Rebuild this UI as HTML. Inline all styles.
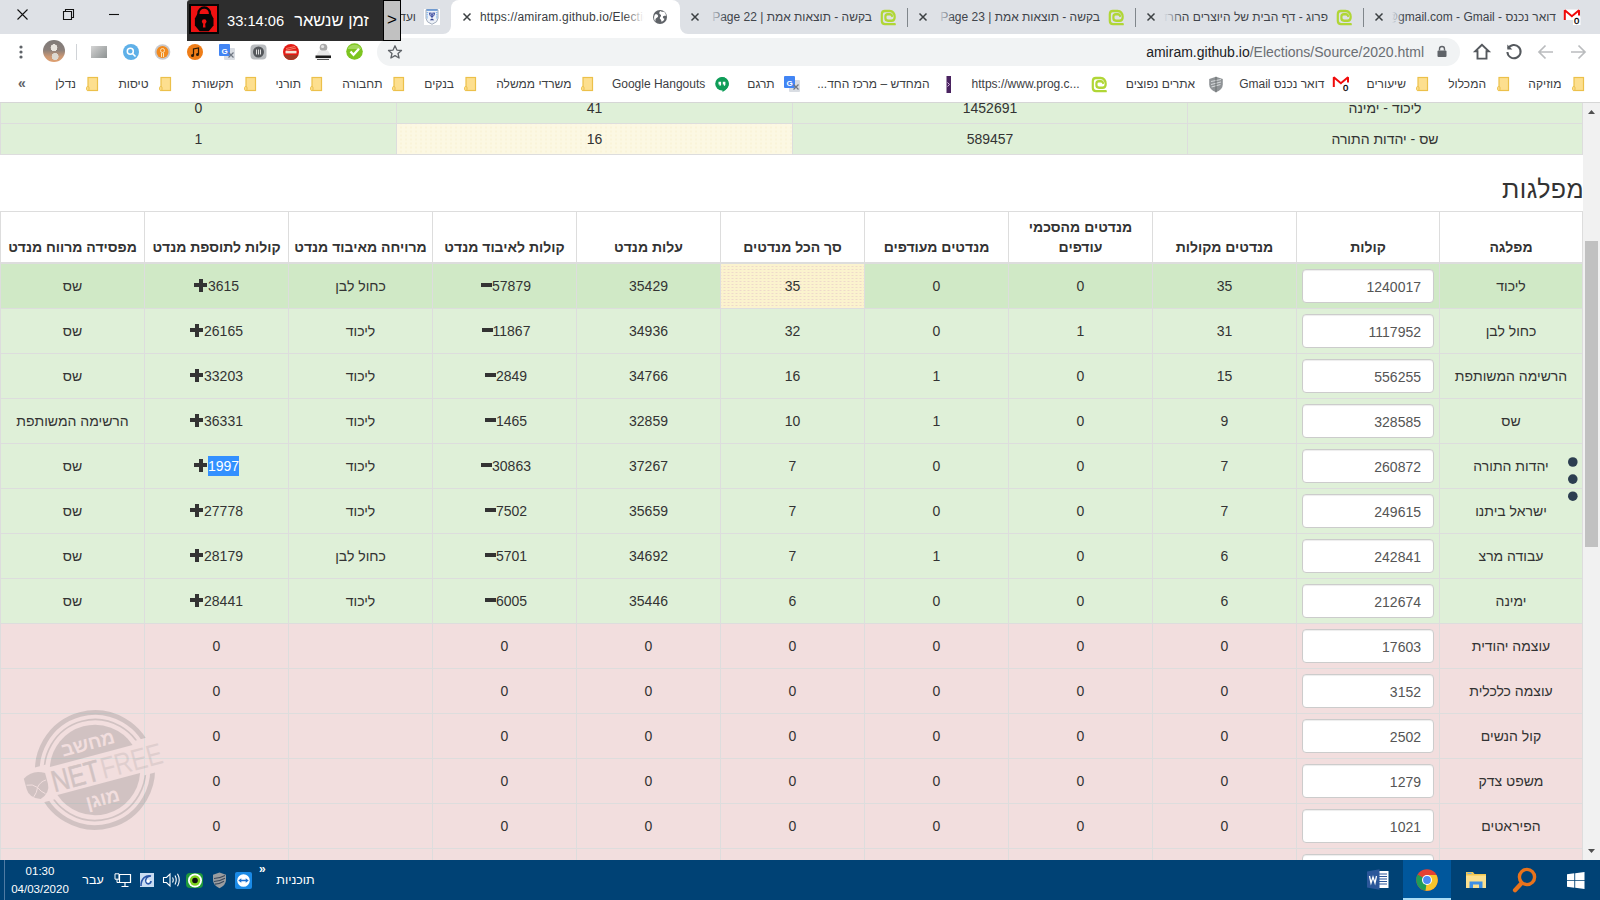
<!DOCTYPE html>
<html lang="he">
<head>
<meta charset="utf-8">
<title>Elections 2020</title>
<style>
*{box-sizing:border-box;margin:0;padding:0}
html,body{width:1600px;height:900px;overflow:hidden;background:#fff}
body{position:relative;font-family:"Liberation Sans","DejaVu Sans",sans-serif;color:#333;font-size:14px}
.abs{position:absolute}
/* ---------- browser chrome ---------- */
#tabstrip{left:0;top:0;width:1600px;height:34px;background:#dee1e6}
#toolbar{left:0;top:34px;width:1600px;height:34px;background:#fff}
#bookbar{left:0;top:68px;width:1600px;height:35px;background:#fff;border-bottom:1px solid #d6d6d6}
.tabtxt{position:absolute;top:9px;height:17px;line-height:17px;font-size:12px;color:#40444a;white-space:nowrap;overflow:hidden;direction:rtl;text-align:right}
.bm{position:absolute;top:8px;height:16px;line-height:16px;font-size:12px;color:#3c4043;white-space:nowrap;direction:rtl}
.fold{position:absolute;top:77px;width:12px;height:15px}
/* ---------- page ---------- */
#page{left:0;top:103px;width:1583px;height:757px;overflow:hidden;background:#fff;direction:rtl}
table{border-collapse:collapse;table-layout:fixed;direction:rtl}
td,th{border:1px solid #ddd;text-align:center;vertical-align:middle;padding:0;font-size:14px;color:#333;white-space:nowrap}
#t1{position:absolute;left:0;top:-11px;width:1583px}
#t1 td{height:31px;background:#dff0d8}
#t2{position:absolute;left:0;top:108px;width:1583px}
#t2 th{height:51px;font-weight:bold;vertical-align:bottom;padding-bottom:5px;line-height:20px;border-bottom:2px solid #ddd;white-space:normal}
#t2 td{height:45px}
tr.g td{background:#dff0d8}
tr.h td{background:#d0e9c6}
#t2 tr.h td{height:46px}
tr.r td{background:#f2dede}
td.w{background:#fbf3ce radial-gradient(rgba(228,196,200,.55) .5px,rgba(0,0,0,0) .8px) 1px 1px/4px 3px !important}
.inp{display:inline-block;width:132px;height:34px;border:1px solid #ccc;border-radius:4px;background:#fff;text-align:right;direction:ltr;padding:0 12px;line-height:34px;font-size:14px;color:#555;vertical-align:middle;box-shadow:inset 0 1px 1px rgba(0,0,0,.075)}
h2{position:absolute;right:-1px;top:70px;font-size:25px;letter-spacing:.4px;font-weight:normal;line-height:33px;color:#333}
.num{display:inline-block;direction:ltr;white-space:nowrap}
.mi,.pl{display:inline-block;position:relative;width:14px;height:14px;vertical-align:-2px}
.mi:before{content:"";position:absolute;left:3px;top:4px;width:11px;height:4px;background:#333}
.pl:before{content:"";position:absolute;left:0px;top:4px;width:13px;height:4px;background:#333}
.pl:after{content:"";position:absolute;left:5px;top:0px;width:4px;height:13px;background:#333}
.sel{background:#3390ff;color:#fff;display:inline-block;height:20px;line-height:20px}
/* ---------- taskbar ---------- */
#taskbar{left:0;top:860px;width:1600px;height:40px;background:#004275}
.tk{color:#fff;white-space:nowrap;line-height:16px;height:16px}
</style>
</head>
<body>
<div id="tabstrip" class="abs">
<!-- window controls -->
<svg class="abs" style="left:12px;top:3.500px" width="120" height="22" viewBox="0 0 120 22">
<path d="M5.5 5.5l10 10M15.5 5.5l-10 10" stroke="#111" stroke-width="1.1" fill="none"/>
<path d="M51.5 7.5h8v8h-8zM53.5 7.500v-2h8v8h-2" stroke="#111" stroke-width="1.1" fill="none"/>
<path d="M97 10.5h10" stroke="#111" stroke-width="1.1" fill="none"/>
</svg>
<!-- hovered left tab -->
<div class="tabtxt" style="left:392px;width:24px;color:#40444a">ועד</div>
<svg class="abs" style="left:424px;top:9px" width="16" height="16" viewBox="0 0 16 16"><rect width="16" height="16" fill="#fff"/><path d="M2 .8h12v8.500q0 4-6 6-6-2-6-6z" fill="#eef2f8" stroke="#9aa5b5" stroke-width=".9"/><path d="M2.500 1h11" stroke="#3f7fd0" stroke-width="1.200"/><path d="M3.200 3v7M12.800 3v7" stroke="#5aa0e8" stroke-width="1" stroke-dasharray="1.200 1"/><path d="M8 3.500v6M5.300 3.500q0 4 2.700 4.200 2.700-.2 2.700-4.200M6.600 3.500q0 2.600 1.400 2.800 1.400-.2 1.400-2.800" fill="none" stroke="#2f3f9a" stroke-width=".9"/><path d="M5.800 11.200q2.200-2.400 4.400 0z" fill="#1d2d80"/></svg>
<!-- active tab -->
<div class="abs" style="left:451px;top:0;width:229px;height:34px;background:#fff;border-radius:8px 8px 0 0"></div>
<svg class="abs" style="left:443px;top:26px" width="8" height="8"><path d="M8 0v8H0a8 8 0 0 0 8-8z" fill="#fff"/></svg>
<svg class="abs" style="left:680px;top:26px" width="8" height="8"><path d="M0 0v8h8a8 8 0 0 1-8-8z" fill="#fff"/></svg>
<svg class="abs" style="left:462px;top:12px" width="10" height="10"><path d="M1.500 1.500l7 7M8.500 1.500l-7 7" stroke="#3c4043" stroke-width="1.500" fill="none"/></svg>
<div class="tabtxt" id="tt0" style="left:480px;width:164px;letter-spacing:.18px;direction:ltr;text-align:left;color:#3a3d42">https://amiram.github.io/Elections/Source/2020.html</div>
<div class="abs" style="left:624px;top:6px;width:20px;height:22px;background:linear-gradient(90deg,rgba(255,255,255,0),#fff)"></div>
<svg class="abs" style="left:652px;top:9px" width="16" height="16" viewBox="0 0 16 16"><circle cx="8" cy="8" r="7" fill="#5f6368"/><path d="M3 5.500c1.500-.5 2.500 0 3 1s-.5 2-1.500 2.500-1.500 2-.8 3.500C2 11.500 1.500 8 3 5.500zM8.500 2c1 .8 2.500 1 3.500.8 1.200 1 2 2.500 2 4-1-.3-2.500-.3-3 .7s.5 2 1.500 2.200c-.5 1.500-1.500 2.500-3 3-.3-1-.2-2-1-2.500s-1-1.500 0-2.500.5-2-.5-2.500S7 3 8.500 2z" fill="#fff"/></svg>
<!-- tab: page 22 -->
<svg class="abs" style="left:690px;top:12px" width="10" height="10"><path d="M1.500 1.500l7 7M8.500 1.500l-7 7" stroke="#3c4043" stroke-width="1.500" fill="none"/></svg>
<div class="tabtxt" style="left:710px;width:162px">בקשה - תוצאות אמת | Page 22</div>
<div class="abs" style="left:710px;top:6px;width:16px;height:22px;background:linear-gradient(90deg,#dee1e6,rgba(222,225,230,0))"></div>
<svg class="abs prog" style="left:879.5px;top:8.500px" width="16" height="17" viewBox="0 0 16 15.500" preserveAspectRatio="none"><path d="M14.800 13.800H5q-3.200 0-3.200-3V4.800q0-3 3-3H9.500q5 .2 5.200 5.400 0 3.500-3.200 3.500H8q-2.600 0-2.600-2.400V7q0-2.200 2.400-2.200h2.200q1.800.2 2 1.500" fill="none" stroke="#b0d636" stroke-width="2.200" stroke-linecap="round"/></svg>
<div class="abs" style="left:907px;top:8px;width:1px;height:19px;background:#80868b"></div>
<!-- tab: page 23 -->
<svg class="abs" style="left:918px;top:12px" width="10" height="10"><path d="M1.500 1.500l7 7M8.500 1.500l-7 7" stroke="#3c4043" stroke-width="1.500" fill="none"/></svg>
<div class="tabtxt" style="left:938px;width:162px">בקשה - תוצאות אמת | Page 23</div>
<div class="abs" style="left:938px;top:6px;width:16px;height:22px;background:linear-gradient(90deg,#dee1e6,rgba(222,225,230,0))"></div>
<svg class="abs prog" style="left:1107.5px;top:8.500px" width="16" height="17" viewBox="0 0 16 15.500" preserveAspectRatio="none"><path d="M14.800 13.800H5q-3.200 0-3.200-3V4.800q0-3 3-3H9.500q5 .2 5.200 5.400 0 3.500-3.200 3.500H8q-2.600 0-2.600-2.400V7q0-2.200 2.400-2.200h2.200q1.800.2 2 1.500" fill="none" stroke="#b0d636" stroke-width="2.200" stroke-linecap="round"/></svg>
<div class="abs" style="left:1135px;top:8px;width:1px;height:19px;background:#80868b"></div>
<!-- tab: prog -->
<svg class="abs" style="left:1146px;top:12px" width="10" height="10"><path d="M1.500 1.500l7 7M8.500 1.500l-7 7" stroke="#3c4043" stroke-width="1.500" fill="none"/></svg>
<div class="tabtxt" style="left:1164px;width:164px">פרוג - דף הבית של היוצרים החרדים</div>
<div class="abs" style="left:1164px;top:6px;width:18px;height:22px;background:linear-gradient(90deg,#dee1e6,rgba(222,225,230,0))"></div>
<svg class="abs prog" style="left:1335.5px;top:8.500px" width="16" height="17" viewBox="0 0 16 15.500" preserveAspectRatio="none"><path d="M14.800 13.800H5q-3.200 0-3.200-3V4.800q0-3 3-3H9.500q5 .2 5.200 5.400 0 3.500-3.200 3.500H8q-2.600 0-2.600-2.400V7q0-2.200 2.400-2.200h2.200q1.800.2 2 1.500" fill="none" stroke="#b0d636" stroke-width="2.200" stroke-linecap="round"/></svg>
<div class="abs" style="left:1363px;top:8px;width:1px;height:19px;background:#80868b"></div>
<!-- tab: gmail -->
<svg class="abs" style="left:1374px;top:12px" width="10" height="10"><path d="M1.500 1.500l7 7M8.500 1.500l-7 7" stroke="#3c4043" stroke-width="1.500" fill="none"/></svg>
<div class="tabtxt" style="left:1392px;width:164px">דואר נכנס - amiram@gmail.com - Gmail</div>
<div class="abs" style="left:1392px;top:6px;width:12px;height:22px;background:linear-gradient(90deg,#dee1e6,rgba(222,225,230,0))"></div>
<svg class="abs" style="left:1563px;top:8px" width="19" height="18" viewBox="0 0 19 18"><rect x="1.500" y="1.500" width="15" height="10.500" fill="#fff"/><path d="M1.800 12V2.300l7.100 5.900 7.100-5.900V7.500" fill="none" stroke="#f00a0a" stroke-width="2" stroke-miterlimit="1.500"/><rect x="10" y="8.500" width="7.500" height="8.500" fill="#fff"/><text x="13.700" y="16.300" font-size="9.500" text-anchor="middle" fill="#000" stroke="#000" stroke-width=".3" font-family="Liberation Sans, sans-serif">0</text></svg>
</div>
<div id="toolbar" class="abs">
<!-- menu dots -->
<svg class="abs" style="left:18px;top:10px" width="6" height="16"><circle cx="3" cy="3" r="1.600" fill="#5f6368"/><circle cx="3" cy="8" r="1.600" fill="#5f6368"/><circle cx="3" cy="13" r="1.600" fill="#5f6368"/></svg>
<!-- avatar -->
<div class="abs" style="left:43px;top:6px;width:22px;height:22px;border-radius:50%;background:radial-gradient(circle at 50% 35%,#e8e4de 0 18%,rgba(0,0,0,0) 20%),radial-gradient(circle at 55% 75%,#ddd8d0 0 16%,rgba(0,0,0,0) 18%),linear-gradient(180deg,#7f7a78 0%,#8a7f7a 45%,#c99774 75%,#e0a070 100%)"></div>
<div class="abs" style="left:76px;top:10px;width:1px;height:16px;background:#d0d3d7"></div>
<!-- extensions -->
<div class="abs" style="left:91px;top:12px;width:16px;height:12px;background:linear-gradient(135deg,#d5d5d5,#a9acac 60%,#8d9292)"></div>
<svg class="abs" style="left:123px;top:10px" width="16" height="16"><circle cx="8" cy="8" r="8" fill="#5fb0e8"/><circle cx="7.300" cy="7.300" r="3" fill="none" stroke="#fff" stroke-width="1.500"/><path d="M9.500 9.500l3 3" stroke="#fff" stroke-width="1.600"/></svg>
<svg class="abs" style="left:154px;top:10px" width="17" height="16"><circle cx="8.500" cy="8" r="7.800" fill="#c9c9cc"/><circle cx="8.500" cy="8" r="6" fill="#f28a1e"/><circle cx="8.500" cy="6.500" r="2" fill="none" stroke="#fbe3b8" stroke-width="1"/><path d="M7.500 9v4M9.500 9v4" stroke="#fbe3b8" stroke-width="1"/></svg>
<svg class="abs" style="left:187px;top:10px" width="16" height="16"><circle cx="8" cy="8" r="8" fill="#ef7d17"/><path d="M6.500 11.500V5l5-1v6.500" fill="none" stroke="#2a1a08" stroke-width="1.200"/><circle cx="5.500" cy="11.500" r="1.500" fill="#2a1a08"/><circle cx="10.500" cy="10.500" r="1.500" fill="#2a1a08"/></svg>
<svg class="abs" style="left:218px;top:9px" width="18" height="18"><rect x="6" y="5" width="11" height="12" rx="1" fill="#d9dde3"/><rect x="1" y="1" width="11" height="12" rx="1" fill="#4285f4"/><text x="6.500" y="10.500" font-size="8" font-weight="bold" text-anchor="middle" fill="#fff" font-family="Liberation Sans, sans-serif">G</text><path d="M10.500 9.500l5 5M15.500 9.500l-5 5" stroke="#6f7782" stroke-width="1.200"/></svg>
<svg class="abs" style="left:250px;top:10px" width="17" height="16"><rect x="0.500" y="0.500" width="16" height="15" rx="4" fill="#b9bcbf"/><circle cx="8.500" cy="8" r="5.500" fill="#55585c"/><path d="M6.500 5.500v5M8.500 5.500v5M10.500 5.500v5" stroke="#e0e0e0" stroke-width="1"/></svg>
<svg class="abs" style="left:283px;top:10px" width="16" height="16"><defs><clipPath id="rc"><circle cx="8" cy="8" r="8"/></clipPath></defs><circle cx="8" cy="8" r="8" fill="#e41a14"/><rect x="0" y="11" width="16" height="5" fill="#a33a26" clip-path="url(#rc)"/><path d="M3 4.500l9-2M3 6.200l10-2.200" stroke="#f59a80" stroke-width=".8"/><rect x="2.500" y="6.800" width="11" height="2.600" fill="#f4e4d8"/></svg>
<svg class="abs" style="left:314px;top:8px" width="18" height="20"><circle cx="9.500" cy="5.500" r="3.800" fill="#a9a9a9"/><circle cx="8.600" cy="4.500" r="1.600" fill="#e4e4e4"/><path d="M5 8.500h9l3 5.500H2z" fill="#e9e9e9"/><rect x="1.500" y="13.500" width="15.500" height="2.600" fill="#1b1b1b"/><rect x="3" y="17" width="12" height="1" fill="#555"/></svg>
<svg class="abs" style="left:346px;top:9px" width="17" height="17"><circle cx="8.500" cy="8.500" r="8.300" fill="#7dc520"/><path d="M1.500 6a8 8 0 0 1 14 0z" fill="#a4d95c"/><path d="M4.500 8.500l3 3.200 5.500-6" fill="none" stroke="#fff" stroke-width="2.400"/></svg>
<!-- omnibox -->
<div class="abs" style="left:377px;top:4px;width:1083px;height:28px;border-radius:14px;background:#f1f3f4"></div>
<svg class="abs" style="left:387px;top:10px" width="16" height="16" viewBox="0 0 16 16"><path d="M8 1.800l1.900 4.300 4.600.4-3.500 3 1.100 4.500L8 11.600 3.900 14l1.100-4.500-3.500-3 4.600-.4z" fill="none" stroke="#5f6368" stroke-width="1.300" stroke-linejoin="round"/></svg>
<div class="abs" id="url" style="left:1100px;top:8px;width:324px;height:20px;line-height:20px;font-size:14px;text-align:right;direction:ltr;white-space:nowrap;color:#6a6e73"><span style="color:#202124">amiram.github.io</span>/Elections/Source/2020.html</div>
<svg class="abs" style="left:1436px;top:11.300px" width="12" height="13" viewBox="0 0 12 13"><path d="M3.500 5.500V4a2.500 2.500 0 0 1 5 0v1.500" fill="none" stroke="#5f6368" stroke-width="1.400"/><rect x="1.500" y="5.500" width="9" height="6.500" rx="1" fill="#5f6368"/></svg>
<!-- nav icons -->
<svg class="abs" style="left:1472px;top:8px" width="20" height="20" viewBox="0 0 20 20"><path d="M10 2.700l-6.800 6.600h2.300v7.300h9v-7.300h2.300z" fill="none" stroke="#55595e" stroke-width="1.900" stroke-linejoin="miter"/></svg>
<svg class="abs" style="left:1504px;top:8px" width="20" height="20" viewBox="0 0 20 20"><path d="M4.200 6.500A6.600 6.600 0 1 1 3.400 10" fill="none" stroke="#55595e" stroke-width="2"/><path d="M3.300 2.500v5h5z" fill="#55595e"/></svg>
<svg class="abs" style="left:1537px;top:10px" width="17" height="16" viewBox="0 0 17 16"><path d="M16 8H2.500M8.500 1.500L2 8l6.500 6.500" fill="none" stroke="#babcbe" stroke-width="1.700"/></svg>
<svg class="abs" style="left:1570px;top:10px" width="17" height="16" viewBox="0 0 17 16"><path d="M1 8h13.500M8.500 1.500L15 8l-6.500 6.500" fill="none" stroke="#babcbe" stroke-width="1.700"/></svg>
</div>
<div id="bookbar" class="abs">
<svg class="abs" style="left:1571.5px;top:8px" width="13" height="16" viewBox="0 0 13 16"><rect x="2" y="1.500" width="9.500" height="13" fill="#fddf8f" stroke="#ecc04a" stroke-width="1.200"/><rect x=".600" y="10.500" width="2.400" height="4" rx="1.200" fill="#fddf8f" stroke="#ecc04a" stroke-width="1"/></svg>
<div class="bm" style="right:38.6px;">מוזיקה</div>
<svg class="abs" style="left:1496.5px;top:8px" width="13" height="16" viewBox="0 0 13 16"><rect x="2" y="1.500" width="9.500" height="13" fill="#fddf8f" stroke="#ecc04a" stroke-width="1.200"/><rect x=".600" y="10.500" width="2.400" height="4" rx="1.200" fill="#fddf8f" stroke="#ecc04a" stroke-width="1"/></svg>
<div class="bm" style="right:114.0px;">המכלול</div>
<svg class="abs" style="left:1416.3px;top:8px" width="13" height="16" viewBox="0 0 13 16"><rect x="2" y="1.500" width="9.500" height="13" fill="#fddf8f" stroke="#ecc04a" stroke-width="1.200"/><rect x=".600" y="10.500" width="2.400" height="4" rx="1.200" fill="#fddf8f" stroke="#ecc04a" stroke-width="1"/></svg>
<div class="bm" style="right:194.0px;">שיעורים</div>
<svg class="abs" style="left:1332px;top:7px" width="19" height="18" viewBox="0 0 19 18"><rect x="1.500" y="1.500" width="15" height="10.500" fill="#fff"/><path d="M1.800 12V2.300l7.100 5.900 7.100-5.900V7.500" fill="none" stroke="#f00a0a" stroke-width="2" stroke-miterlimit="1.500"/><rect x="10" y="8.500" width="7.500" height="8.500" fill="#fff"/><text x="13.700" y="16.300" font-size="9.500" text-anchor="middle" fill="#000" stroke="#000" stroke-width=".3" font-family="Liberation Sans, sans-serif">0</text></svg>
<div class="bm" style="right:275.6px;">דואר נכנס Gmail</div>
<svg class="abs" style="left:1208px;top:8px" width="16" height="17" viewBox="0 0 16 17"><path d="M8 .8l6.800 2.200v5.500q0 5-6.800 7.800Q1.200 13.500 1.200 8.500V3z" fill="#8f9396"/><path d="M3 5.500l10-2M3 8.500l10-2.500M3.500 11l9-2.500" stroke="#d5d8da" stroke-width="1.100"/><path d="M8 .8v15.500" stroke="#5f6466" stroke-width=".8"/></svg>
<div class="bm" style="right:405.0px;">אתרים נפוצים</div>
<svg class="abs" style="left:1091px;top:7.500px" width="16" height="17" viewBox="0 0 16 15.500" preserveAspectRatio="none"><path d="M14.800 13.800H5q-3.200 0-3.200-3V4.800q0-3 3-3H9.500q5 .2 5.200 5.400 0 3.500-3.200 3.500H8q-2.600 0-2.600-2.400V7q0-2.200 2.400-2.200h2.200q1.800.2 2 1.500" fill="none" stroke="#b0d636" stroke-width="2.200" stroke-linecap="round"/></svg>
<div class="bm" style="right:520.4px;direction:ltr;">https://www.prog.c...</div>
<svg class="abs" style="left:946px;top:8px" width="6" height="17" viewBox="0 0 6 17"><rect x=".5" y="0" width="4.500" height="17" fill="#4a2360"/><path d="M1.500 6.500l2 2-2 2" stroke="#e8c8f0" stroke-width=".9" fill="none"/></svg>
<div class="bm" style="right:670.4px;">המחדש – מרכז החד...</div>
<svg class="abs" style="left:783px;top:7px" width="18" height="18"><rect x="6" y="5" width="11" height="12" rx="1" fill="#d9dde3"/><rect x="1" y="1" width="11" height="12" rx="1" fill="#4285f4"/><text x="6.500" y="10.500" font-size="8" font-weight="bold" text-anchor="middle" fill="#fff" font-family="Liberation Sans, sans-serif">G</text><path d="M10.500 9.500l5 5M15.500 9.500l-5 5" stroke="#6f7782" stroke-width="1.200"/></svg>
<div class="bm" style="right:825.4px;">תרגם</div>
<svg class="abs" style="left:714px;top:8px" width="16" height="17" viewBox="0 0 16 17"><path d="M8 1a6.800 6.800 0 0 1 6.800 6.800q0 5.200-6.300 8.200v-1.800A6.800 6.800 0 0 1 8 1z" fill="#0f9d58"/><circle cx="8" cy="7.800" r="6.800" fill="#0f9d58"/><path d="M4.500 5.800h2.600v2.600q0 1.400-1.500 1.600v-1.600h-1.100zM8.800 5.800h2.600v2.600q0 1.400-1.500 1.600v-1.600h-1.100z" fill="#fff"/></svg>
<div class="bm" style="right:894.7px;direction:ltr;">Google Hangouts</div>
<svg class="abs" style="left:581.0px;top:8px" width="13" height="16" viewBox="0 0 13 16"><rect x="2" y="1.500" width="9.500" height="13" fill="#fddf8f" stroke="#ecc04a" stroke-width="1.200"/><rect x=".600" y="10.500" width="2.400" height="4" rx="1.200" fill="#fddf8f" stroke="#ecc04a" stroke-width="1"/></svg>
<div class="bm" style="right:1028.5px;">משרדי ממשלה</div>
<svg class="abs" style="left:463.5px;top:8px" width="13" height="16" viewBox="0 0 13 16"><rect x="2" y="1.500" width="9.500" height="13" fill="#fddf8f" stroke="#ecc04a" stroke-width="1.200"/><rect x=".600" y="10.500" width="2.400" height="4" rx="1.200" fill="#fddf8f" stroke="#ecc04a" stroke-width="1"/></svg>
<div class="bm" style="right:1146.0px;">בנקים</div>
<svg class="abs" style="left:392.0px;top:8px" width="13" height="16" viewBox="0 0 13 16"><rect x="2" y="1.500" width="9.500" height="13" fill="#fddf8f" stroke="#ecc04a" stroke-width="1.200"/><rect x=".600" y="10.500" width="2.400" height="4" rx="1.200" fill="#fddf8f" stroke="#ecc04a" stroke-width="1"/></svg>
<div class="bm" style="right:1217.5px;">תחבורה</div>
<svg class="abs" style="left:310.0px;top:8px" width="13" height="16" viewBox="0 0 13 16"><rect x="2" y="1.500" width="9.500" height="13" fill="#fddf8f" stroke="#ecc04a" stroke-width="1.200"/><rect x=".600" y="10.500" width="2.400" height="4" rx="1.200" fill="#fddf8f" stroke="#ecc04a" stroke-width="1"/></svg>
<div class="bm" style="right:1299.0px;">תורני</div>
<svg class="abs" style="left:243.5px;top:8px" width="13" height="16" viewBox="0 0 13 16"><rect x="2" y="1.500" width="9.500" height="13" fill="#fddf8f" stroke="#ecc04a" stroke-width="1.200"/><rect x=".600" y="10.500" width="2.400" height="4" rx="1.200" fill="#fddf8f" stroke="#ecc04a" stroke-width="1"/></svg>
<div class="bm" style="right:1366.5px;">תקשורת</div>
<svg class="abs" style="left:158.5px;top:8px" width="13" height="16" viewBox="0 0 13 16"><rect x="2" y="1.500" width="9.500" height="13" fill="#fddf8f" stroke="#ecc04a" stroke-width="1.200"/><rect x=".600" y="10.500" width="2.400" height="4" rx="1.200" fill="#fddf8f" stroke="#ecc04a" stroke-width="1"/></svg>
<div class="bm" style="right:1451.5px;">טיסות</div>
<svg class="abs" style="left:86.0px;top:8px" width="13" height="16" viewBox="0 0 13 16"><rect x="2" y="1.500" width="9.500" height="13" fill="#fddf8f" stroke="#ecc04a" stroke-width="1.200"/><rect x=".600" y="10.500" width="2.400" height="4" rx="1.200" fill="#fddf8f" stroke="#ecc04a" stroke-width="1"/></svg>
<div class="bm" style="right:1524.0px;">נדלן</div>
<div class="bm" style="left:18px;font-size:14px;font-weight:bold;color:#5f6368;top:7px">»</div>
</div>
<div id="overlay" class="abs" style="left:0;top:0;z-index:5">
<!-- dark overlay timer -->
<div class="abs" style="left:187px;top:0;width:214px;height:41px;background:#2d2d2d;border-radius:3px 0 0 0"></div>
<div class="abs" style="left:189px;top:4px;width:30px;height:30px;background:#ee1111;border:2px solid #050505"></div>
<svg class="abs" style="left:189px;top:4px" width="30" height="30" viewBox="0 0 30 30"><path d="M9.400 11.500V9.300a5.800 5.800 0 0 1 11.600 0v2.200" fill="none" stroke="#050505" stroke-width="2.300"/><path d="M8.300 10h13.800l2.400 4.500v7l-4.800 5.700h-9l-4.800-5.700v-7z" fill="#050505"/><circle cx="15.200" cy="17.500" r="2.300" fill="#ee1111"/><path d="M14.300 18.500h1.800l.4 5h-2.600z" fill="#ee1111"/></svg>
<div class="abs" id="timer" style="left:227px;top:8.500px;width:146px;height:22px;line-height:22px;font-size:16.500px;color:#fff;white-space:nowrap;direction:ltr"><span style="font-size:14.700px">33:14:06</span><span style="display:inline-block;width:10px"></span>זמן שנשאר</div>
<div class="abs" style="left:383px;top:0;width:18px;height:41px;background:#c1c1c1;border:1px solid #000;font-size:17px;line-height:38px;text-align:center;color:#000">&gt;</div>
</div>
<div id="page" class="abs">
<table id="t1">
<colgroup><col style="width:395px"><col style="width:395px"><col style="width:396px"><col style="width:396px"></colgroup>
<tr><td>ליכוד - ימינה</td><td>1452691</td><td>41</td><td>0</td></tr>
<tr><td>שס - יהדות התורה</td><td>589457</td><td class="w" style="background:#fcf8e3 radial-gradient(rgba(240,225,160,.5) .5px,rgba(0,0,0,0) .8px) 1px 1px/5px 4px !important">16</td><td>1</td></tr>
</table>
<h2>מפלגות</h2>
<table id="t2">
<colgroup><col style="width:143px"><col style="width:143px"><col style="width:144px"><col style="width:144px"><col style="width:144px"><col style="width:144px"><col style="width:144px"><col style="width:144px"><col style="width:144px"><col style="width:144px"><col style="width:144px"></colgroup>
<tr><th>מפלגה</th><th>קולות</th><th>מנדטים מקולות</th><th>מנדטים מהסכמי עודפים</th><th>מנדטים מעודפים</th><th>סך הכל מנדטים</th><th>עלות מנדט</th><th>קולות לאיבוד מנדט</th><th>מרויחה מאיבוד מנדט</th><th>קולות לתוספת מנדט</th><th>מפסידה מרווח מנדט</th></tr>
<tr class="h"><td>ליכוד</td><td><span class="inp">1240017</span></td><td>35</td><td>0</td><td>0</td><td class="w">35</td><td>35429</td><td><span class="num"><i class="mi"></i>57879</span></td><td>כחול לבן</td><td><span class="num"><i class="pl"></i>3615</span></td><td>שס</td></tr>
<tr class="g"><td>כחול לבן</td><td><span class="inp">1117952</span></td><td>31</td><td>1</td><td>0</td><td>32</td><td>34936</td><td><span class="num"><i class="mi"></i>11867</span></td><td>ליכוד</td><td><span class="num"><i class="pl"></i>26165</span></td><td>שס</td></tr>
<tr class="g"><td>הרשימה המשותפת</td><td><span class="inp">556255</span></td><td>15</td><td>0</td><td>1</td><td>16</td><td>34766</td><td><span class="num"><i class="mi"></i>2849</span></td><td>ליכוד</td><td><span class="num"><i class="pl"></i>33203</span></td><td>שס</td></tr>
<tr class="g"><td>שס</td><td><span class="inp">328585</span></td><td>9</td><td>0</td><td>1</td><td>10</td><td>32859</td><td><span class="num"><i class="mi"></i>1465</span></td><td>ליכוד</td><td><span class="num"><i class="pl"></i>36331</span></td><td>הרשימה המשותפת</td></tr>
<tr class="g"><td>יהדות התורה</td><td><span class="inp">260872</span></td><td>7</td><td>0</td><td>0</td><td>7</td><td>37267</td><td><span class="num"><i class="mi"></i>30863</span></td><td>ליכוד</td><td><span class="num"><i class="pl"></i><span class="sel">1997</span></span></td><td>שס</td></tr>
<tr class="g"><td>ישראל ביתנו</td><td><span class="inp">249615</span></td><td>7</td><td>0</td><td>0</td><td>7</td><td>35659</td><td><span class="num"><i class="mi"></i>7502</span></td><td>ליכוד</td><td><span class="num"><i class="pl"></i>27778</span></td><td>שס</td></tr>
<tr class="g"><td>עבודה מרצ</td><td><span class="inp">242841</span></td><td>6</td><td>0</td><td>1</td><td>7</td><td>34692</td><td><span class="num"><i class="mi"></i>5701</span></td><td>כחול לבן</td><td><span class="num"><i class="pl"></i>28179</span></td><td>שס</td></tr>
<tr class="g"><td>ימינה</td><td><span class="inp">212674</span></td><td>6</td><td>0</td><td>0</td><td>6</td><td>35446</td><td><span class="num"><i class="mi"></i>6005</span></td><td>ליכוד</td><td><span class="num"><i class="pl"></i>28441</span></td><td>שס</td></tr>
<tr class="r"><td>עוצמה יהודית</td><td><span class="inp">17603</span></td><td>0</td><td>0</td><td>0</td><td>0</td><td>0</td><td>0</td><td></td><td>0</td><td></td></tr>
<tr class="r"><td>עוצמה כלכלית</td><td><span class="inp">3152</span></td><td>0</td><td>0</td><td>0</td><td>0</td><td>0</td><td>0</td><td></td><td>0</td><td></td></tr>
<tr class="r"><td>קול הנשים</td><td><span class="inp">2502</span></td><td>0</td><td>0</td><td>0</td><td>0</td><td>0</td><td>0</td><td></td><td>0</td><td></td></tr>
<tr class="r"><td>משפט צדק</td><td><span class="inp">1279</span></td><td>0</td><td>0</td><td>0</td><td>0</td><td>0</td><td>0</td><td></td><td>0</td><td></td></tr>
<tr class="r"><td>הפיראטים</td><td><span class="inp">1021</span></td><td>0</td><td>0</td><td>0</td><td>0</td><td>0</td><td>0</td><td></td><td>0</td><td></td></tr>
<tr class="r"><td></td><td><span class="inp"></span></td><td></td><td></td><td></td><td></td><td></td><td></td><td></td><td></td><td></td></tr>
</table>
</div>
<div id="scroll" class="abs" style="left:1583px;top:103px;width:17px;height:757px;background:#f1f1f1">
<svg class="abs" style="left:5px;top:7px" width="7" height="4"><path d="M0 4L3.500 0 7 4z" fill="#505050"/></svg>
<div class="abs" style="left:2px;top:138px;width:13px;height:306px;background:#c1c1c1"></div>
<svg class="abs" style="left:5px;top:746px" width="7" height="4"><path d="M0 0L3.500 4 7 0z" fill="#505050"/></svg>
</div>
<svg class="abs" style="left:1567px;top:456px" width="12" height="46"><circle cx="5.800" cy="6" r="4.800" fill="#2c3e50"/><circle cx="5.800" cy="23.100" r="4.800" fill="#2c3e50"/><circle cx="5.800" cy="40.200" r="4.800" fill="#2c3e50"/></svg>
<svg class="abs" id="stamp" style="left:10px;top:695px;opacity:.27" width="170" height="150" viewBox="-85 -75 170 150">
<defs><clipPath id="ringclip"><rect x="-80" y="-80" width="160" height="62"/><rect x="-80" y="18" width="160" height="62"/></clipPath></defs>
<g transform="rotate(-15)" fill="#7a7a7a" font-family="Liberation Sans, sans-serif">
<g clip-path="url(#ringclip)"><circle r="57.500" fill="none" stroke="#7a7a7a" stroke-width="4.800"/>
<circle r="50.500" fill="none" stroke="#7a7a7a" stroke-width="1.600"/></g>
<path d="M-42.800 -14.500A45.200 45.200 0 0 1 42.800 -14.500z"/>
<path d="M-42.800 14.500A45.200 45.200 0 0 0 42.800 14.500z"/>
<text x="0" y="-21" font-size="19" font-weight="bold" text-anchor="middle" fill="#f2dede" direction="rtl">מחשב</text>
<text x="0" y="36" font-size="19" font-weight="bold" text-anchor="middle" fill="#f2dede" direction="rtl">מוגן</text>
<text x="-45" y="11" font-size="30" textLength="49" lengthAdjust="spacingAndGlyphs" stroke="#7a7a7a" stroke-width=".600">NET</text>
<text x="6" y="11" font-size="30" textLength="63" lengthAdjust="spacingAndGlyphs" opacity=".55">FREE</text>
<path d="M-71 -10q11-7 22 0v11q0 9-11 13-11-4-11-13z"/>
<path d="M-70 -3q6 0 10 5 4-5 10-5M-60 2q-2 5-6 8M-60 2q2 5 6 8" fill="none" stroke="#f2dede" stroke-width=".900"/>
</g>
</svg>
<div id="taskbar" class="abs">
<div class="abs" style="left:4px;top:0;width:1px;height:40px;background:#4f7ba3"></div>
<div class="abs tk" style="left:10px;top:3px;width:60px;text-align:center;font-size:11.500px">01:30</div>
<div class="abs tk" style="left:10px;top:21px;width:60px;text-align:center;font-size:11.500px">04/03/2020</div>
<div class="abs tk" style="left:80px;top:12px;width:26px;text-align:center;font-size:12.500px">עבר</div>
<!-- network -->
<svg class="abs" style="left:114px;top:13px" width="18" height="15" viewBox="0 0 18 15"><path d="M5.500 1.500h11v8h-11zM11 9.500v3.500M7.500 13.500h7" fill="none" stroke="#fff" stroke-width="1.200"/><path d="M1 .8h4v5.400h-4zM3 6.200v3.300h2.500" fill="none" stroke="#fff" stroke-width="1"/></svg>
<!-- swirl app -->
<svg class="abs" style="left:140px;top:13px" width="14" height="14" viewBox="0 0 14 14"><rect width="14" height="14" fill="#c9dcf2"/><path d="M1 13C1 5 6 2 11 3c-4 0-6 3-5 6s5 2 5-1" fill="none" stroke="#2a55a8" stroke-width="1.600"/><circle cx="8" cy="8" r="1.600" fill="#fff"/></svg>
<!-- volume -->
<svg class="abs" style="left:162px;top:12px" width="19" height="16" viewBox="0 0 19 16"><path d="M1.500 5.500h3l3.500-3.500v12l-3.500-3.500h-3z" fill="none" stroke="#fff" stroke-width="1.100"/><path d="M10.500 5.500q1.500 2.500 0 5M13 3.500q2.500 4.500 0 9M15.500 1.800q3.500 6.200 0 12.400" fill="none" stroke="#fff" stroke-width="1.100"/></svg>
<!-- green eye -->
<svg class="abs" style="left:186px;top:12px" width="18" height="17" viewBox="0 0 18 17"><rect x="0" y="1" width="17" height="15" rx="4" fill="#1f9a3a"/><circle cx="9" cy="8.500" r="7" fill="#fff"/><circle cx="9" cy="8.500" r="5.200" fill="#7ed321"/><circle cx="9" cy="8.500" r="2.800" fill="#111"/></svg>
<!-- shield -->
<svg class="abs" style="left:212px;top:12px" width="15" height="17" viewBox="0 0 15 17"><path d="M7.500 .5l6.500 2.300v5.200q0 5-6.500 8.200Q1 13 1 8V2.800z" fill="#9a9da0"/><path d="M2 6.500q5.500 0 11-3M2 9.500q5.500 0 11-3.200M3 12.200q4.500-.3 9-3" stroke="#3c4a5c" stroke-width="1.200" fill="none"/></svg>
<!-- teamviewer -->
<svg class="abs" style="left:235px;top:12px" width="17" height="17" viewBox="0 0 17 17"><rect width="17" height="17" rx="2" fill="#1a8ae6"/><circle cx="8.500" cy="8.500" r="6.300" fill="#fff"/><path d="M3.300 8.500l3-2.200v1.500h4.400V6.300l3 2.200-3 2.200V9.200H6.300v1.500z" fill="#1a6fd0"/></svg>
<div class="abs tk" style="left:259px;top:1px;font-size:12px;font-weight:bold">»</div>
<div class="abs tk" style="left:274px;top:12px;width:43px;text-align:center;font-size:12.500px">תוכניות</div>
<!-- word -->
<svg class="abs" style="left:1367px;top:9px" width="22" height="21" viewBox="0 0 22 21"><rect x="8" y="2" width="13.500" height="17" fill="#fff"/><path d="M11 5h9M11 7.500h9M11 10h9M11 12.500h9M11 15h9" stroke="#2b579a" stroke-width="1.200"/><path d="M0 2.500l12.500-2.300v20.600L0 18.500z" fill="#2b579a"/><path d="M2.500 7l1.500 7 2-6 2 6 1.500-7" fill="none" stroke="#fff" stroke-width="1.300"/></svg>
<!-- chrome (active) -->
<div class="abs" style="left:1403px;top:0;width:48px;height:40px;background:#00579c"></div>
<div class="abs" style="left:1403px;top:38px;width:48px;height:2px;background:#a9dcf5"></div>
<svg class="abs" style="left:1416px;top:9px" width="22" height="22" viewBox="0 0 22 22"><circle cx="11" cy="11" r="10.800" fill="#e34133"/><path d="M11 11L1.650 5.600A10.800 10.800 0 0 0 9.500 21.700L14 13z" fill="#1f9d57"/><path d="M11 11h10.800A10.800 10.800 0 0 1 9.500 21.700z" fill="#f7c52b"/><path d="M11 6h9.500a10.800 10.800 0 0 1 1.300 5H11z" fill="#f7c52b"/><circle cx="11" cy="11" r="5" fill="#fff"/><circle cx="11" cy="11" r="3.900" fill="#4a8af4"/></svg>
<!-- explorer -->
<svg class="abs" style="left:1465px;top:10px" width="22" height="20" viewBox="0 0 22 20"><path d="M1 2h7l1.500 2H21v14H1z" fill="#f3c74f"/><rect x="1" y="5.500" width="20" height="12.500" fill="#fbe08f"/><path d="M4.500 18v-6.500h13V18h-3.500v-3.500h-6V18z" fill="#3d8fe6"/><rect x="2.500" y="2.800" width="4" height="1.200" fill="#6fb1f0"/></svg>
<!-- search -->
<svg class="abs" style="left:1511px;top:7px" width="26" height="26" viewBox="0 0 26 26"><circle cx="16" cy="10" r="7.600" fill="none" stroke="#e8731c" stroke-width="3.400"/><path d="M10.500 16.300L4 23.300" stroke="#e8731c" stroke-width="4.200" stroke-linecap="round"/></svg>
<!-- windows -->
<svg class="abs" style="left:1567px;top:12px" width="18" height="17" viewBox="0 0 18 17"><path d="M0 2.300l7.300-1v6.900H0zM8.200 1.200L17.500 0v8.200H8.200zM0 9h7.300v6.800L0 14.800zM8.200 9h9.300v8L8.200 15.800z" fill="#fff"/></svg>
</div>
</body>
</html>
